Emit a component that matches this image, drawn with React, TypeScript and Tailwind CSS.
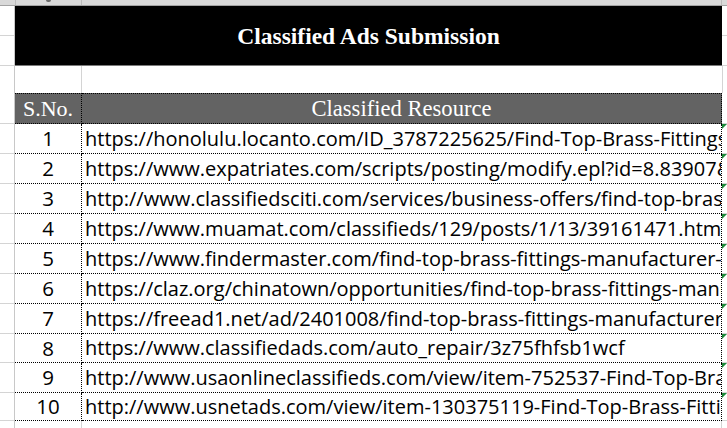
import React from 'react';

const rows = [
  { n: 1, url: 'https://honolulu.locanto.com/ID_3787225625/Find-Top-Brass-Fittings-Manufacturer-India/', h: 'h-[30px]' },
  { n: 2, url: 'https://www.expatriates.com/scripts/posting/modify.epl?id=8.83907&key=find', h: 'h-[30px]' },
  { n: 3, url: 'http://www.classifiedsciti.com/services/business-offers/find-top-brass-fittings', h: 'h-[30px]' },
  { n: 4, url: 'https://www.muamat.com/classifieds/129/posts/1/13/39161471.html', h: 'h-[30px]' },
  { n: 5, url: 'https://www.findermaster.com/find-top-brass-fittings-manufacturer-india', h: 'h-[30px]' },
  { n: 6, url: 'https://claz.org/chinatown/opportunities/find-top-brass-fittings-manufacturer', h: 'h-[30px]' },
  { n: 7, url: 'https://freead1.net/ad/2401008/find-top-brass-fittings-manufacturer-india', h: 'h-[30px]' },
  { n: 8, url: 'https://www.classifiedads.com/auto_repair/3z75fhfsb1wcf', h: 'h-[29px]' },
  { n: 9, url: 'http://www.usaonlineclassifieds.com/view/item-752537-Find-Top-Brass-Fittings', h: 'h-[30px]' },
  { n: 10, url: 'http://www.usnetads.com/view/item-130375119-Find-Top-Brass-Fittings-Manufacturer', h: 'h-[28px]' },
];

const sans = "font-['Open_Sans',sans-serif]";
const serif = "font-['Liberation_Serif',serif]";

// left gutter (column A) and right spill (column D) share the same grid look
function GutterA({ line = true }: { line?: boolean }) {
  return <div className={`w-[15px] shrink-0 bg-white border-r border-[#c8c8c8] ${line ? 'border-b border-b-[#d4d4d4]' : ''}`} />;
}

function GutterD({ mark = false }: { mark?: boolean }) {
  return (
    <div className="relative flex-1 bg-white border-b border-[#d4d4d4]">
      {mark && (
        <span className="absolute left-0 top-0 w-0 h-0 border-t-[5px] border-r-[5px] border-t-[#1f8a3b] border-r-transparent" />
      )}
    </div>
  );
}

export default function App() {
  return (
    <div className="w-[727px] h-[428px] overflow-hidden bg-white flex flex-col">
      {/* column letters strip, mostly cut off */}
      <div className="h-[6px] shrink-0 flex bg-[#d9d9d9] border-b border-[#a3a3a3]">
        <div className="w-[16px] border-r border-[#bcbcbc]" />
        <div className="w-[66px] border-r border-[#bcbcbc] flex justify-center">
          <span className="w-[5px] h-[2px] bg-[#6b6b6b] rounded-b-sm" />
        </div>
        <div className="w-[640px] border-r border-[#bcbcbc]" />
        <div className="flex-1" />
      </div>

      {/* title */}
      <div className="h-[60px] shrink-0 flex">
        <div className="w-[15px] shrink-0 flex flex-col border-r border-[#c8c8c8]">
          <div className="h-[30px] border-b border-[#d4d4d4]" />
          <div className="flex-1 border-b border-[#d4d4d4]" />
        </div>
        <div className={`w-[707px] shrink-0 bg-black border-b border-[#7a7a7a] flex items-center justify-center pt-[3px] text-white text-[23.5px] font-bold ${serif}`}>
          Classified Ads Submission
        </div>
        <div className="flex-1 flex flex-col">
          <div className="h-[30px] border-b border-[#d4d4d4]" />
          <div className="flex-1 border-b border-[#d4d4d4]" />
        </div>
      </div>

      {/* blank row */}
      <div className="h-[27px] shrink-0 flex">
        <GutterA line={false} />
        <div className="w-[67px] shrink-0 border-r border-[#d4d4d4]" />
        <div className="w-[640px] shrink-0" />
        <div className="flex-1 border-l border-[#d4d4d4]" />
      </div>

      {/* header row */}
      <div className="h-[31px] shrink-0 flex">
        <GutterA />
        <div className={`w-[67px] shrink-0 bg-[#636363] border border-dotted border-black border-l-0 flex items-center justify-center text-white text-[22px] ${serif}`}>
          S.No.
        </div>
        <div className={`w-[640px] shrink-0 bg-[#636363] border-y border-r border-dotted border-black flex items-center justify-center text-white text-[22.6px] ${serif}`}>
          Classified Resource
        </div>
        <GutterD />
      </div>

      {rows.map(r => (
        <div key={r.n} className={`${r.h} shrink-0 flex`}>
          <GutterA />
          <div className={`w-[67px] shrink-0 border-b border-r border-dotted border-black flex items-center justify-center text-black text-[20.5px] ${sans}`}>
            {r.n}
          </div>
          <div className={`w-[640px] shrink-0 border-b border-r border-dotted border-black overflow-hidden whitespace-nowrap flex items-center pl-[3px] text-black text-[20px] ${sans}`}>
            {r.url}
          </div>
          <GutterD mark />
        </div>
      ))}

      <div className="flex-1 flex">
        <div className="w-[15px] shrink-0 border-r border-[#c8c8c8]" />
        <div className="w-[67px] shrink-0 border-r border-[#d4d4d4]" />
        <div className="w-[640px] shrink-0 border-r border-[#d4d4d4]" />
        <div className="flex-1" />
      </div>
    </div>
  );
}
